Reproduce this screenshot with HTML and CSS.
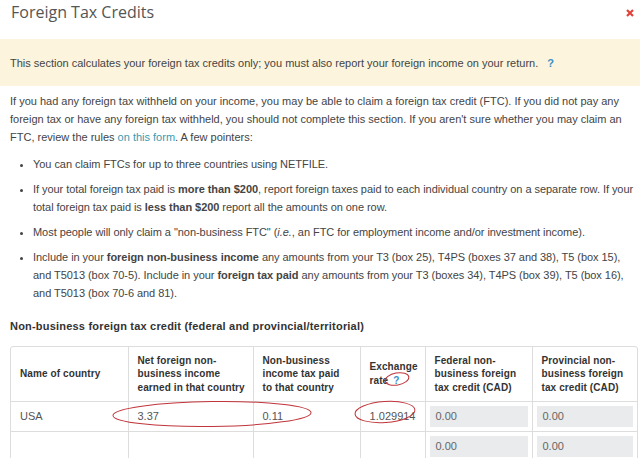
FILE: index.html
```html
<!DOCTYPE html>
<html>
<head>
<meta charset="utf-8">
<link rel="stylesheet" href="styles.css">
</head>
<body>
<div class="modal">
  <div class="header">
    <h1 class="title">Foreign Tax Credits</h1>
    <svg class="close" width="8" height="8" viewBox="0 0 8 8"><path d="M1 1 L7 7 M7 1 L1 7"/></svg>
  </div>
  <div class="notice">This section calculates your foreign tax credits only; you must also report your foreign income on your return. <span class="help">?</span></div>
  <p class="intro">If you had any foreign tax withheld on your income, you may be able to claim a foreign tax credit (FTC). If you did not pay any foreign tax or have any foreign tax withheld, you should not complete this section. If you aren't sure whether you may claim an FTC, review the rules <a class="link">on this form</a>. A few pointers:</p>
  <ul class="points">
    <li>You can claim FTCs for up to three countries using NETFILE.</li>
    <li>If your total foreign tax paid is <b>more than $200</b>, report foreign taxes paid to each individual country on a separate row. If your total foreign tax paid is <b>less than $200</b> report all the amounts on one row.</li>
    <li>Most people will only claim a "non-business FTC" (<i>i.e.</i>, an FTC for employment income and/or investment income).</li>
    <li>Include in your <b>foreign non-business income</b> any amounts from your T3 (box 25), T4PS (boxes 37 and 38), T5 (box 15), and T5013 (box 70-5). Include in your <b>foreign tax paid</b> any amounts from your T3 (boxes 34), T4PS (box 39), T5 (box 16), and T5013 (box 70-6 and 81).</li>
  </ul>
  <h2 class="section">Non-business foreign tax credit (federal and provincial/territorial)</h2>
  <div class="table-wrap">
    <table class="ftc">
      <colgroup>
        <col class="c1"><col class="c2"><col class="c3"><col class="c4"><col class="c5"><col class="c6">
      </colgroup>
      <thead>
        <tr>
          <th>Name of country</th>
          <th>Net foreign non-business income earned in that country</th>
          <th>Non-business income tax paid<br>to that country</th>
          <th>Exchange rate <span class="help">?</span></th>
          <th>Federal non-business foreign tax credit (CAD)</th>
          <th>Provincial non-business foreign tax credit (CAD)</th>
        </tr>
      </thead>
      <tbody>
        <tr>
          <td>USA</td>
          <td>3.37</td>
          <td>0.11</td>
          <td class="num">1.029914</td>
          <td class="boxcell"><div class="ro">0.00</div></td>
          <td class="boxcell"><div class="ro">0.00</div></td>
        </tr>
        <tr>
          <td></td>
          <td></td>
          <td></td>
          <td></td>
          <td class="boxcell"><div class="ro">0.00</div></td>
          <td class="boxcell"><div class="ro">0.00</div></td>
        </tr>
      </tbody>
    </table>
  </div>
  <svg class="marks" width="640" height="458" viewBox="0 0 640 458">
    <ellipse cx="212" cy="414" rx="99" ry="12.5" transform="rotate(-0.8 212 414)"/>
    <ellipse cx="385" cy="412" rx="30" ry="10.5" transform="rotate(-4 385 412)"/>
    <ellipse cx="397" cy="379" rx="12" ry="6" transform="rotate(-10 397 379)"/>
  </svg>
</div>
</body>
</html>
```
FILE: styles.css
```css
html, body {
  margin: 0;
  padding: 0;
  background: #fff;
}
body {
  font-family: "Liberation Sans", Arial, sans-serif;
  font-size: 11px;
  color: #444;
  overflow: hidden;
  width: 640px;
  height: 458px;
}
.modal {
  position: relative;
  width: 640px;
}
.header {
  display: flex;
  justify-content: space-between;
  align-items: flex-start;
  height: 39px;
  padding: 0 6px 0 11px;
}
.title {
  margin: 0;
  font-family: "Open Sans", "Liberation Sans", sans-serif;
  font-weight: 400;
  font-size: 16px;
  line-height: 24px;
  color: #555;
}
.close {
  margin-top: 9px;
}
.close path {
  stroke: #e0433a;
  stroke-width: 2.2;
  fill: none;
}
.notice {
  background: #fcf4dc;
  padding: 15px 10px 14px;
  line-height: 18px;
}
.help {
  color: #3a8fc8;
  font-weight: bold;
  margin-left: 6px;
}
.intro {
  margin: 6px 0 0;
  padding: 0 10px;
  line-height: 18px;
}
.link {
  color: #3a9ab0;
}
.points {
  margin: 9px 0 0;
  padding: 0 4px 0 33px;
  line-height: 18px;
  letter-spacing: -0.05px;
}
.points li {
  margin-bottom: 7px;
}
.section {
  margin: 15px 0 0;
  padding: 0 10px;
  font-size: 11px;
  letter-spacing: 0.2px;
  line-height: 18px;
  color: #333;
}
.table-wrap {
  margin: 11px 2px 0 10px;
  border: 1px solid #ddd;
  border-radius: 3px;
  overflow: hidden;
}
.ftc {
  width: 100%;
  border-collapse: collapse;
  table-layout: fixed;
}
.c1 { width: 117px; }
.c2 { width: 125px; }
.c3 { width: 107px; }
.c4 { width: 65px; }
.c5 { width: 107px; }
.c6 { width: auto; }
.ftc th, .ftc td {
  border-left: 1px solid #ddd;
  border-bottom: 1px solid #ddd;
  text-align: left;
  vertical-align: middle;
}
.ftc th:first-child, .ftc td:first-child {
  border-left: none;
}
.ftc th {
  font-size: 10px;
  letter-spacing: 0.1px;
  font-weight: bold;
  color: #333;
  line-height: 13.5px;
  height: 54px;
  padding: 0 5px 0 9px;
  box-sizing: border-box;
}
.ftc th .help {
  margin-left: 2px;
}
.ftc td {
  height: 30px;
  padding: 0 9px;
  box-sizing: border-box;
  color: #555;
}
.ftc td.num {
  text-align: right;
  padding-right: 9px;
}
.ftc td.boxcell {
  padding: 4px;
}
.ro {
  background: #e9ebec;
  height: 21px;
  line-height: 21px;
  padding: 0 6px;
  color: #666;
}
.marks {
  position: absolute;
  left: 0;
  top: 0;
  pointer-events: none;
}
.marks ellipse {
  fill: none;
  stroke: #c0343a;
  stroke-width: 1;
}
```
